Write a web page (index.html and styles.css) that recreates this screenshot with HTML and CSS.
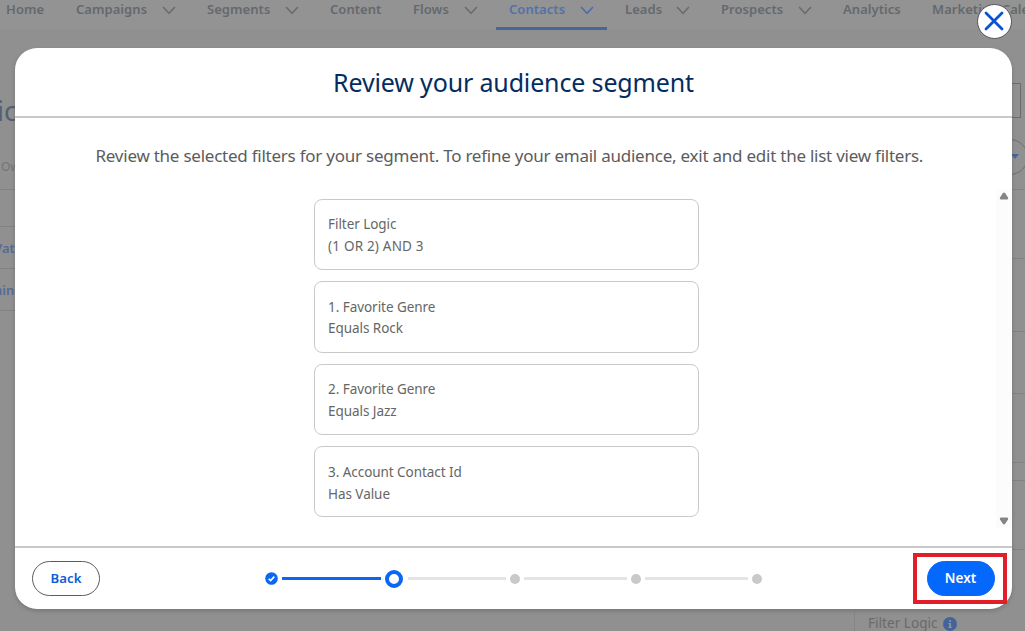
FILE: index.html
```html
<!DOCTYPE html>
<html lang="en">
<head>
<meta charset="utf-8">
<title>Review your audience segment</title>
<link rel="stylesheet" href="styles.css">
</head>
<body>
<div class="page">
  <nav class="nav">
    <span class="tab home">Home</span>
    <span class="tab">Campaigns<svg class="chev" viewBox="0 0 14 9"><path d="M1.5 1.5 7 7.3l5.500-5.800"/></svg></span>
    <span class="tab">Segments<svg class="chev" viewBox="0 0 14 9"><path d="M1.5 1.5 7 7.3l5.500-5.800"/></svg></span>
    <span class="tab">Content</span>
    <span class="tab">Flows<svg class="chev" viewBox="0 0 14 9"><path d="M1.5 1.5 7 7.3l5.500-5.800"/></svg></span>
    <span class="tab active">Contacts<svg class="chev" viewBox="0 0 14 9"><path d="M1.5 1.5 7 7.3l5.500-5.800"/></svg></span>
    <span class="tab">Leads<svg class="chev" viewBox="0 0 14 9"><path d="M1.5 1.5 7 7.3l5.500-5.800"/></svg></span>
    <span class="tab">Prospects<svg class="chev" viewBox="0 0 14 9"><path d="M1.5 1.5 7 7.3l5.500-5.800"/></svg></span>
    <span class="tab">Analytics</span>
    <span class="tab marketing">Marketing Calendar</span>
  </nav>
  <div class="backdrop-row">
    <div class="left-edge">
      <div class="edge-title">ic</div>
      <div class="edge-owner">Ow</div>
      <div class="edge-head"></div>
      <div class="edge-link">Vata</div>
      <div class="edge-link">ning</div>
    </div>
    <div class="right-edge">
      <div class="edge-buttons"></div>
      <div class="edge-round"><svg viewBox="0 0 8 6"><path d="M0 0h8L4 5z"/></svg></div>
      <div class="cell c1"></div>
      <div class="cell c2"></div>
      <div class="cell c3"></div>
      <div class="cell c4"></div>
      <div class="cell c5"></div>
      <div class="cell c6"></div>
      <div class="cell c7"></div>
    </div>
  </div>
  <div class="panel-foot">Filter Logic
    <svg class="info" viewBox="0 0 14 14"><circle cx="7" cy="7" r="7"/><path d="M6.200 3h1.800v1.700H6.200zM5.500 6h2.500v3.800h.8V11H5.400V9.800h.8V7.200h-.7z"/></svg>
  </div>
</div>

<section class="modal">
  <header class="modal-head"><h1>Review your audience segment</h1></header>
  <div class="modal-body">
    <p class="intro">Review the selected filters for your segment. To refine your email audience, exit and edit the list view filters.</p>
    <div class="scroll">
      <div class="cards">
        <div class="card"><div>Filter Logic</div><div class="logic">(1 OR 2) AND 3</div></div>
        <div class="card tall"><div>1. Favorite Genre</div><div>Equals Rock</div></div>
        <div class="card"><div>2. Favorite Genre</div><div>Equals Jazz</div></div>
        <div class="card loose"><div>3. Account Contact Id</div><div>Has Value</div></div>
      </div>
      <div class="bar">
        <svg viewBox="0 0 10 8"><path d="M3.800 1.200Q5 0 6.200 1.200L9 5.500Q9.800 7.500 8 7.500H2Q.2 7.500 1 5.500z"/></svg>
        <svg viewBox="0 0 10 8"><path d="M3.800 6.800Q5 8 6.200 6.800L9 2.500Q9.800.5 8 .5H2Q.2.5 1 2.500z"/></svg>
      </div>
    </div>
  </div>
  <footer class="modal-foot">
    <button class="btn back">Back</button>
    <div class="steps">
      <svg class="done" viewBox="0 0 13 13"><circle cx="6.500" cy="6.500" r="6.300"/><path d="m3.700 6.700 1.900 1.900 3.700-4"/></svg>
      <i class="line full"></i>
      <i class="current"></i>
      <i class="line first"></i><i class="dot"></i>
      <i class="line"></i><i class="dot"></i>
      <i class="line"></i><i class="dot"></i>
    </div>
    <div class="highlight"><button class="btn next">Next</button></div>
  </footer>
</section>
<button class="close" aria-label="Close"><svg viewBox="0 0 20 20"><path d="m2 2 16 16M18 2 2 18"/></svg></button>
</body>
</html>
```
FILE: styles.css
```css
* { box-sizing: border-box; }
body {
  margin: 0;
  position: relative;
  width: 1025px;
  height: 631px;
  overflow: hidden;
  font-family: "Noto Sans", "Open Sans", sans-serif;
  background: #909090;
}
.page { height: 631px; display: flex; flex-direction: column; overflow: hidden; }
.nav {
  height: 31px;
  flex: none;
  display: grid;
  grid-template-columns: 70px 131px 123px 83px 96px 116px 96px 122px 89px 130px;
  padding-left: 6px;
  background: #939393;
  border-bottom: 1px solid #8e8e8e;
  color: #64696e;
  font-size: 13px;
  font-weight: 600;
  letter-spacing: .05px;
  line-height: 18px;
  overflow: hidden;
}
.tab { display: flex; justify-content: space-between; align-items: flex-start; padding-right: 32px; white-space: nowrap; height: 30px; }
.chev { width: 14px; height: 9px; margin: 6px -1px 0 0; fill: none; stroke: #6a6d70; stroke-width: 1.7; stroke-linecap: round; }
.active { color: #5272a8; margin-left: -13px; padding-left: 13px; margin-right: 18px; padding-right: 14px; border-bottom: 3px solid #4a6697; }
.active .chev { stroke: #4d6ea6; }
.backdrop-row { flex: 1; display: flex; justify-content: space-between; }
.left-edge { width: 15px; overflow: hidden; white-space: nowrap; padding-top: 55px; }
.edge-title { height: 50px; font-size: 27px; line-height: 50px; color: #556070; margin-left: -3px; }
.edge-owner { height: 54px; padding: 20px 0 0 1px; font-size: 12px; line-height: 22px; color: #757575; border-bottom: 1px solid #828282; }
.edge-head { height: 37px; border-bottom: 1px solid #828282; }
.edge-link { height: 42px; line-height: 42px; font-size: 13px; font-weight: 600; color: #566b94; border-bottom: 1px solid #828282; margin-left: -6px; }
.right-edge { width: 13px; overflow: hidden; padding-top: 52px; }
.edge-buttons { height: 35px; width: 9px; border: 1px solid #6c6c6c; border-left: 0; }
.edge-round { width: 36px; height: 36px; margin: 21px 0 0 -20px; border: 1px solid #6e6e6e; border-radius: 50%; display: flex; align-items: center; padding-left: 18px; }
.edge-round svg { width: 8px; height: 6px; fill: #4a6499; }
.cell { border-bottom: 1px solid #828282; }
.c1 { height: 15px; } .c2 { height: 69px; } .c3 { height: 73px; } .c4 { height: 62px; }
.c5 { height: 69px; } .c6 { height: 18px; } .c7 { height: 69px; }
.panel-foot { flex: none; height: 19px; margin-left: 854px; padding-left: 13px; border-left: 1px solid #858585; display: flex; align-items: flex-start; gap: 5px; font-size: 13.600px; line-height: 22px; color: #6a6a6a; }
.info { width: 14px; height: 14px; margin-top: 5px; flex: none; }
.info circle { fill: #44639a; }
.info path { fill: #929292; }

.modal {
  position: absolute;
  left: 15px;
  top: 48px;
  width: 997px;
  height: 561px;
  display: flex;
  flex-direction: column;
  background: #fff;
  border-radius: 22px;
  box-shadow: 0 2px 4px rgba(0, 0, 0, .18);
}
.modal-head { height: 70px; flex: none; border-bottom: 2px solid #c9c9c9; text-align: center; }
h1 { margin: 0; font-size: 25px; font-weight: 400; line-height: 68px; letter-spacing: -.15px; color: #032d60; white-space: nowrap; }
.modal-body { flex: 1; display: flex; flex-direction: column; }
.intro { margin: 26px 0 0 80.500px; height: 45px; font-size: 17px; line-height: 24px; letter-spacing: -.24px; color: #5c5c5c; white-space: nowrap; }
.scroll { flex: 1; display: flex; justify-content: space-between; }
.cards { margin: 10px 0 0 299px; width: 385px; display: flex; flex-direction: column; gap: 11px; }
.card { height: 71px; border: 1px solid #c9c9c9; border-radius: 8px; padding: 14px 13px; font-size: 13.500px; line-height: 21.500px; letter-spacing: -.05px; color: #666; }
.tall { height: 72px; padding-top: 15px; line-height: 21px; }
.loose { line-height: 22px; }
.logic { letter-spacing: .2px; }
.bar { width: 16px; height: 339px; background: #fcfcfc; display: flex; flex-direction: column; justify-content: space-between; padding: 3px 0 3px 3px; }
.bar svg { width: 10px; height: 8px; fill: #858585; }
.modal-foot { height: 63px; flex: none; border-top: 2px solid #c9c9c9; display: flex; align-items: center; padding: 0 5px 0 17px; }
.btn { width: 68px; height: 35px; border-radius: 18px; padding: 0; font: 600 13.200px/33px "Noto Sans", "Open Sans", sans-serif; }
.back { color: #0b5cd6; background: #fff; border: 1px solid #5c5c5c; }
.steps { display: flex; align-items: center; margin-left: 165px; }
.done { width: 13px; height: 13px; fill: #0b66f5; margin-right: 4px; }
.done path { fill: none; stroke: #fff; stroke-width: 1.600; }
.line { width: 103px; height: 3px; background: #e4e4e4; }
.first { width: 98px; }
.full { width: 99px; background: #0b66f5; margin-right: 4px; }
.current { width: 18px; height: 18px; border: 4px solid #0b66f5; border-radius: 50%; margin-right: 5px; }
.dot { width: 10px; height: 10px; border-radius: 50%; background: #c9c9c9; margin: 0 4px; }
.dot:last-child { margin-right: 0; }
.highlight { margin-left: auto; width: 94px; height: 51px; border: 4px solid #e01f2b; display: flex; justify-content: center; align-items: center; padding-left: 1px; }
.next { background: #0568fd; color: #fff; border: 1px solid #0568fd; font-size: 13.500px; }
.close { position: absolute; left: 977px; top: 4px; width: 35px; height: 35px; border: 1px solid #555; border-radius: 50%; background: #fff; padding: 0 1px 1px 0; display: flex; align-items: center; justify-content: center; }
.close svg { width: 20px; height: 20px; fill: none; stroke: #0b53ce; stroke-width: 2.800; stroke-linecap: round; }
```
